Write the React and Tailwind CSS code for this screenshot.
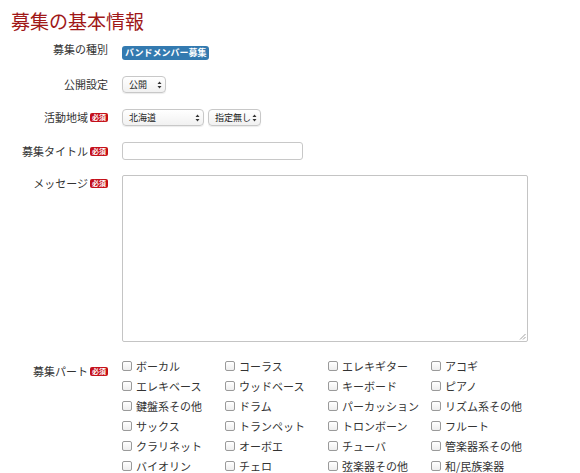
import React from 'react';

const PARTS = [
  'ボーカル', 'コーラス', 'エレキギター', 'アコギ',
  'エレキベース', 'ウッドベース', 'キーボード', 'ピアノ',
  '鍵盤系その他', 'ドラム', 'パーカッション', 'リズム系その他',
  'サックス', 'トランペット', 'トロンボーン', 'フルート',
  'クラリネット', 'オーボエ', 'チューバ', '管楽器系その他',
  'バイオリン', 'チェロ', '弦楽器その他', '和/民族楽器',
];

const Required = () => (
  <span className="ml-[2px] inline-flex items-center rounded-[2px] bg-[#c4101a] px-[2px] text-[7px] leading-[9px] font-bold text-white">必須</span>
);

const Arrows = () => (
  <svg width="5" height="8" viewBox="0 0 5 8" className="shrink-0">
    <path d="M2.5 0.5 L4.5 3 L0.5 3 Z M2.5 7.5 L4.5 5 L0.5 5 Z" fill="#333" />
  </svg>
);

const Select = ({ label, width }) => (
  <div className={`${width} flex h-[17px] items-center justify-between whitespace-nowrap rounded-[4px] border border-[#c8c8c8] bg-gradient-to-b from-white to-[#f1f1f1] pl-[6px] pr-[3px] text-[9px] text-[#222] shadow-[0_1px_1px_rgba(0,0,0,0.08)]`}>
    <span>{label}</span>
    <Arrows />
  </div>
);

const Row = ({ label, required, className = '', labelClass = 'items-center', children }) => (
  <div className={`flex ${labelClass} ${className}`}>
    <div className="flex w-[108px] shrink-0 items-center justify-end text-[11px] text-[#333]">
      <span>{label}</span>
      {required && <Required />}
    </div>
    <div className="ml-[14px]">{children}</div>
  </div>
);

export default function App() {
  return (
    <div className="h-[473px] w-[580px] overflow-hidden bg-white pt-[8px] font-['Noto_Sans_CJK_JP','Noto_Sans',sans-serif]">
      <h2 className="ml-[11px] text-[19px] leading-[26px] font-normal text-[#a01818]">募集の基本情報</h2>

      <Row label="募集の種別" className="mt-[3px]">
        <span className="inline-block rounded-[3px] bg-[#337ab0] px-[3px] text-[9px] leading-[14px] font-bold text-white">バンドメンバー募集</span>
      </Row>

      <Row label="公開設定" className="mt-[15px]">
        <Select label="公開" width="w-[44px]" />
      </Row>

      <Row label="活動地域" required className="mt-[16px]">
        <div className="flex gap-[4px]">
          <Select label="北海道" width="w-[82px]" />
          <Select label="指定無し" width="w-[53px]" />
        </div>
      </Row>

      <Row label="募集タイトル" required className="mt-[16px]">
        <div className="h-[18px] w-[181px] rounded-[3px] border border-[#c8c8c8] bg-white" />
      </Row>

      <Row label="メッセージ" required labelClass="items-start" className="mt-[15px]">
        <div className="relative h-[167px] w-[406px] rounded-[2px] border border-[#c4c4c4] bg-white">
          <svg width="7" height="7" viewBox="0 0 7 7" className="absolute right-[1px] bottom-[1px]">
            <path d="M6.5 1 L1 6.5 M6.5 4 L4 6.5" stroke="#888" strokeWidth="0.8" />
          </svg>
        </div>
      </Row>

      <Row label="募集パート" required labelClass="items-start" className="mt-[21px]">
        <div className="-mt-[4px] grid grid-cols-[103px_103px_103px_103px] gap-y-[6px]">
          {PARTS.map((p) => (
            <label key={p} className="flex h-[14px] items-center text-[11px] text-[#333]">
              <span className="mr-[4px] h-[10px] w-[10px] rounded-[2px] border border-[#9a9a9a] bg-gradient-to-b from-white to-[#eee]" />
              {p}
            </label>
          ))}
        </div>
      </Row>
    </div>
  );
}
